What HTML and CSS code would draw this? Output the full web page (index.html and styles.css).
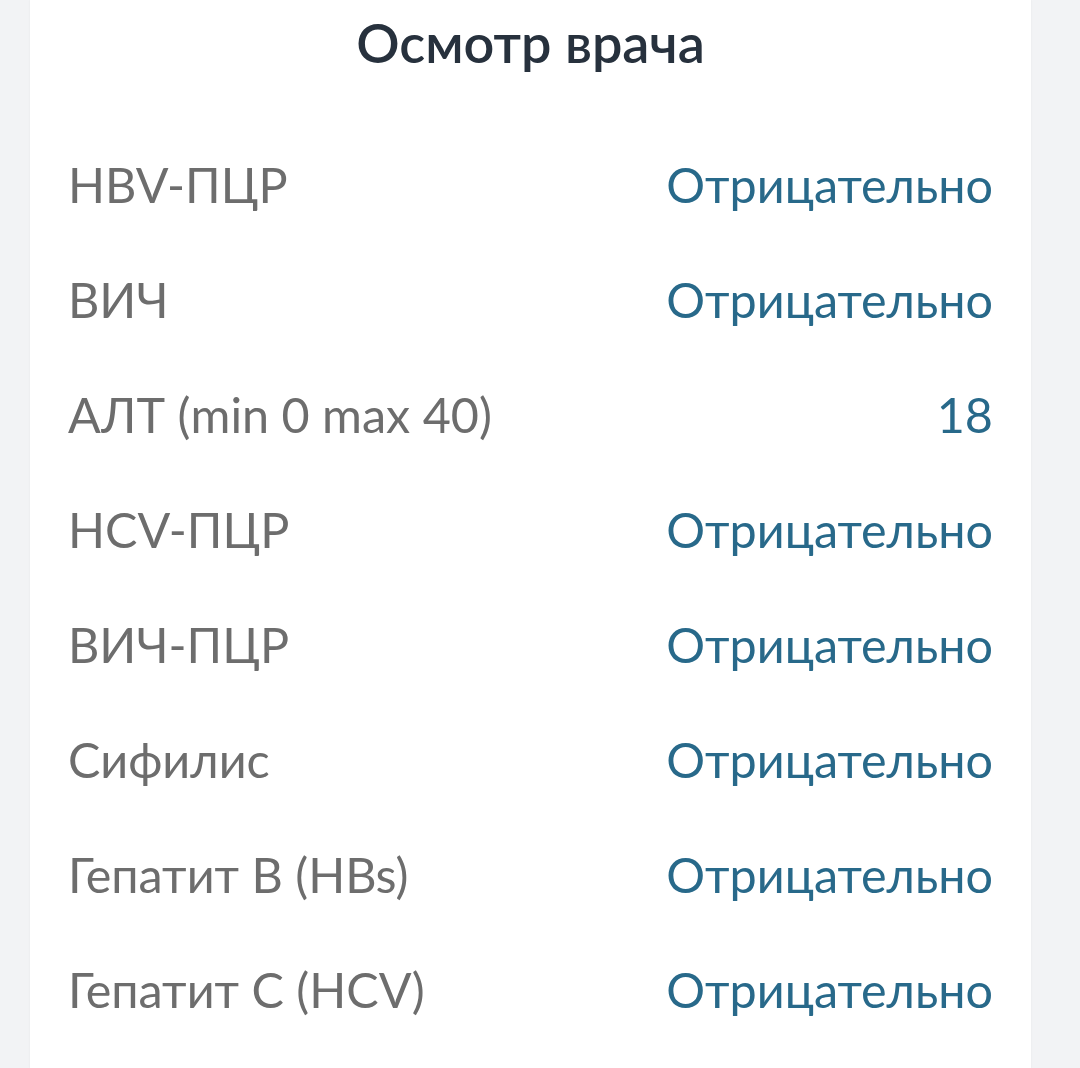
FILE: index.html
```html
<!DOCTYPE html>
<html lang="ru">
<head>
<meta charset="utf-8">
<link rel="stylesheet" href="styles.css">
</head>
<body>
<div class="card">
  <h1 class="title">Осмотр врача</h1>
  <div class="rows">
    <div class="row"><span class="label">HBV-ПЦР</span><span class="value">Отрицательно</span></div>
    <div class="row"><span class="label">ВИЧ</span><span class="value">Отрицательно</span></div>
    <div class="row"><span class="label">АЛТ (min 0 max 40)</span><span class="value">18</span></div>
    <div class="row"><span class="label">HCV-ПЦР</span><span class="value">Отрицательно</span></div>
    <div class="row"><span class="label">ВИЧ-ПЦР</span><span class="value">Отрицательно</span></div>
    <div class="row"><span class="label">Сифилис</span><span class="value">Отрицательно</span></div>
    <div class="row"><span class="label">Гепатит B (HBs)</span><span class="value">Отрицательно</span></div>
    <div class="row"><span class="label">Гепатит C (HCV)</span><span class="value">Отрицательно</span></div>
  </div>
</div>
</body>
</html>
```
FILE: styles.css
```css
html, body {
  margin: 0;
  padding: 0;
  background: #f2f3f5;
  height: 100%;
  overflow: hidden;
}
body {
  font-family: Lato, "Noto Sans", sans-serif;
}
.card {
  margin: 0 49px 0 30px;
  background: #ffffff;
  min-height: 1068px;
  padding: 0 38px;
  box-shadow: 0 0 2px rgba(0,0,0,0.06);
}
.title {
  margin: 0;
  height: 126px;
  padding-top: 10px;
  box-sizing: border-box;
  line-height: 66px;
  text-align: center;
  font-size: 54px;
  font-weight: 600;
  color: #27313d;
}
.rows {
  display: flex;
  flex-direction: column;
}
.row {
  height: 115px;
  display: flex;
  align-items: center;
  justify-content: space-between;
  font-size: 48.5px;
}
.label {
  color: #6d6d6d;
}
.value {
  color: #28698a;
}
```
